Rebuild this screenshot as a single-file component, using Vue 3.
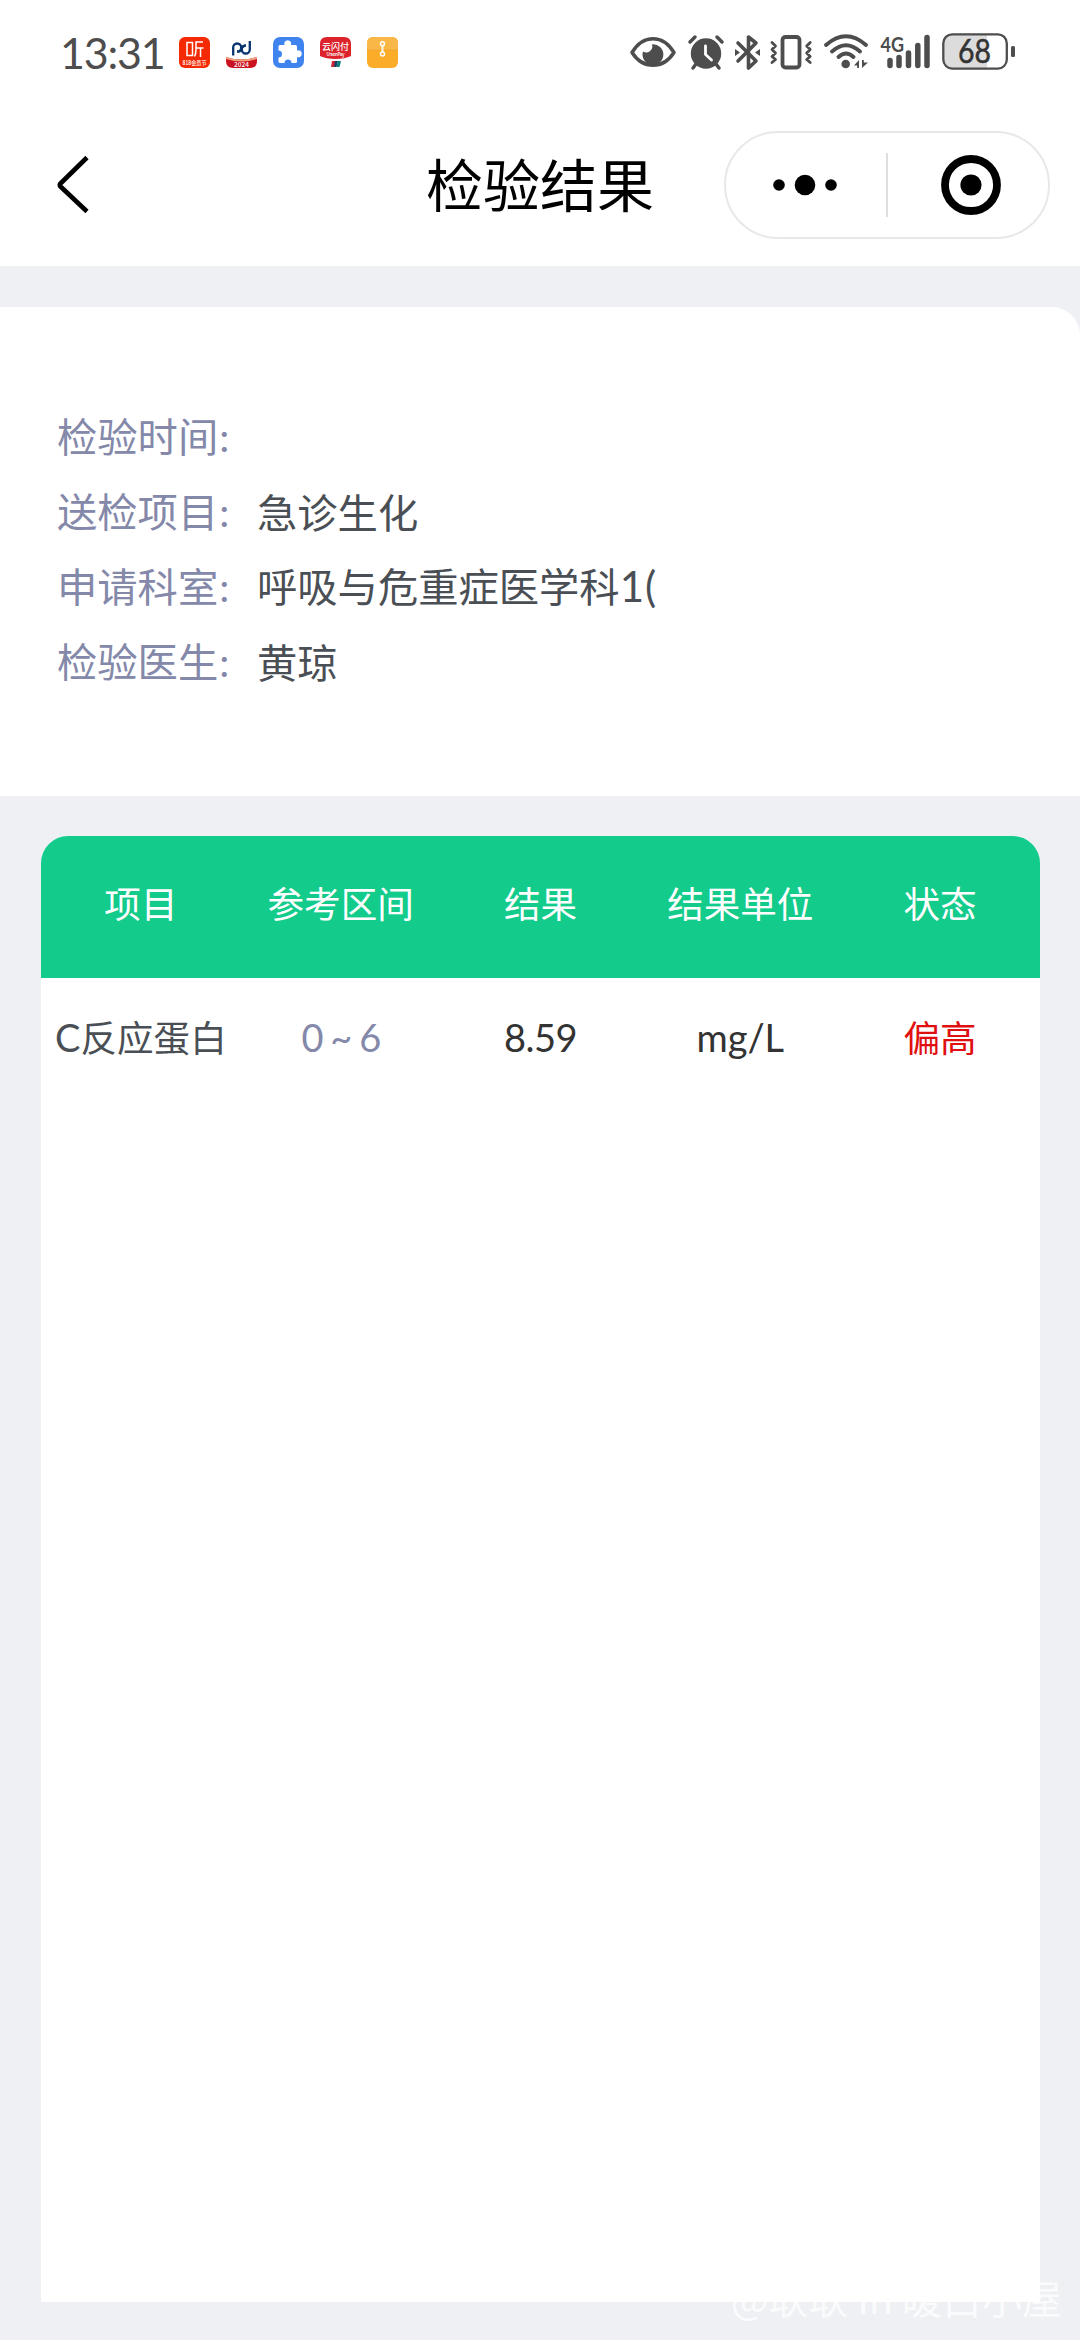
<script setup>
const details = [
  { label: '检验时间', value: '' },
  { label: '送检项目', value: '急诊生化' },
  { label: '申请科室', value: '呼吸与危重症医学科', suffix: '1(' },
  { label: '检验医生', value: '黄琼' },
]
const columns = ['项目', '参考区间', '结果', '结果单位', '状态']
const results = [
  { prefix: 'C', name: '反应蛋白', range: '0 ~ 6', value: '8.59', unit: 'mg/L', status: '偏高' },
]
</script>

<template>
  <div class="page">
    <header class="top">
      <div class="status">
        <span class="clock">13:31</span>
        <div class="apps">
          <svg viewBox="0 0 31 31" class="app">
            <rect width="31" height="31" rx="6" fill="#f52a05" />
            <g fill="none" stroke="#fff" stroke-width="1.5">
              <path d="M8 5.500h5.500v13H8zM24 5h-7v8c0 3-.5 4.500-1.500 6.500M17 11h7.500M21.500 11v9" />
            </g>
            <text x="15.500" y="28" class="app-text" font-size="6" textLength="24" lengthAdjust="spacingAndGlyphs">818会员节</text>
          </svg>
          <svg viewBox="0 0 31 31" class="app">
            <g fill="none" stroke="#08356f" stroke-width="2.300">
              <path d="M7.200 18.500V10.500a4 4 0 1 1 4 4" />
              <path d="M23.800 4v8.500a4 4 0 1 1-4-4" />
              <path d="M11.200 14.500q4 .5 4.300-2.500t4.300-3.500" />
            </g>
            <path d="M0 20q15 5 31 0v4q0 7-7 7H7q-7 0-7-7z" fill="#cb1220" />
            <path d="M0 20q15 5 31 0v2q-15 5-31 0z" fill="#f0a47e" />
            <text x="15.500" y="29.500" class="app-text" font-size="6.500" textLength="15">2024</text>
          </svg>
          <svg viewBox="0 0 31 31" class="app">
            <rect width="31" height="31" rx="7" fill="#3f84ee" />
            <path d="M7 8H11.500A3.500 3.500 0 1 1 18 8H22.500Q24 8 24 9.500V13.500A3.500 3.500 0 1 1 24 20V24.500Q24 26 22.500 26H18.500A3.500 3.500 0 0 0 11.500 26H7Q5.500 26 5.500 24.500V20.500A3.500 3.500 0 0 0 5.500 13.500V9.500Q5.500 8 7 8Z" fill="#fff" />
          </svg>
          <svg viewBox="0 0 31 31" class="app">
            <path d="M7 0h17q7 0 7 7v12q-6 3-15.500 3T0 19V7q0-7 7-7z" fill="#dc232b" />
            <text x="15.500" y="13" class="app-text" font-size="9" textLength="27">云闪付</text>
            <text x="15.500" y="18.500" class="app-text" font-size="4.500" textLength="18">UnionPay</text>
            <path d="M12 24h4l-1.500 6H11z" fill="#c82938" />
            <path d="M15 24h3l-1.500 6H14z" fill="#153d64" />
            <path d="M18 24h3l-1.500 6h-3z" fill="#087b76" />
          </svg>
          <svg viewBox="0 0 31 31" class="app">
            <rect width="31" height="31" rx="6" fill="#fbac28" />
            <path d="M0 13V6q0-6 6-6h19q6 0 6 6v7z" fill="#f8b747" />
            <path d="M0 13h31" stroke="#eca52e" stroke-width=".7" />
            <g fill="none" stroke="#fff" stroke-width="1.500">
              <circle cx="15.500" cy="6.800" r="2" /><circle cx="15.500" cy="17" r="2" />
              <path d="M15.500 8.500v7" stroke-width="2.200" opacity=".85" />
            </g>
          </svg>
        </div>
        <div class="signals">
          <svg width="46" height="40" viewBox="630 32 46 40">
            <path d="M632 52.500C643 34 663 34 674 52.500C663 69.500 643 69.500 632 52.500Z" fill="none" stroke="#4d4d4d" stroke-width="3.500" stroke-linejoin="round" />
            <path d="M652 44.200A10.400 10.400 0 1 1 643 51.500A6.200 6.200 0 0 0 652 44.200Z" fill="#4d4d4d" />
          </svg>
          <svg width="36" height="40" viewBox="688 32 36 40" class="alarm">
            <circle cx="706" cy="53.500" r="15.200" fill="#4d4d4d" />
            <g fill="none" stroke="#4d4d4d" stroke-width="3.500" stroke-linecap="round">
              <path d="M690 42l5-5M722 42l-5-5M696 64l-3 4M716 64l3 4" />
            </g>
            <path d="M705.500 46v8.500l6 5.500" fill="none" stroke="#fff" stroke-width="2.800" stroke-linecap="round" />
          </svg>
          <svg width="26" height="40" viewBox="735 32 26 40" class="bt">
            <g fill="none" stroke="#4d4d4d" stroke-width="3.600" stroke-linejoin="round" stroke-linecap="round">
              <path d="M738 43l18 18-7.500 7v-31L756 43l-18 18" />
            </g>
            <path d="M735 49l5 3.500-5 3.500zM760 49l-5 3.500 5 3.500z" fill="#4d4d4d" />
          </svg>
          <svg width="42" height="40" viewBox="770 32 42 40" class="vib">
            <g fill="none" stroke="#4d4d4d" stroke-linecap="round" stroke-linejoin="round">
              <rect x="782.500" y="37" width="17" height="30.500" rx="3" stroke-width="3.800" />
              <path d="M772 42.500l3.500 3.500-3.500 3.500 3.500 3.500-3.500 3.500 3.500 3-3.500 3M810.200 42.500l-3.500 3.500 3.500 3.500-3.500 3.500 3.500 3.500-3.500 3 3.500 3" stroke-width="2.800" />
            </g>
          </svg>
          <svg width="44" height="40" viewBox="824 32 44 40" class="wifi">
            <g fill="none" stroke="#4d4d4d" stroke-width="3.900" stroke-linecap="round">
              <path d="M826 45Q846 27.500 866 45M832 51.500Q846 39 860 51.500M838.500 57Q846 50 853.500 57" />
            </g>
            <circle cx="845.700" cy="64" r="4.300" fill="#4d4d4d" />
            <path d="M859 60v8h-1.800v-2.500H854zM862 60h1.800v2.500h4.200L862 68z" fill="#4d4d4d" />
          </svg>
          <svg width="50" height="40" viewBox="880 32 50 40" class="cell">
            <text x="880.500" y="51.500" class="net" textLength="23.500" lengthAdjust="spacingAndGlyphs">4G</text>
            <g stroke="#4d4d4d" stroke-width="5.500" stroke-linecap="round">
              <path d="M890 60.500v5M899 57.500v8M908.500 53v12.500M917.800 45.500v20M927 37.500v28" />
            </g>
          </svg>
          <svg width="74" height="40" viewBox="942 32 74 40" class="batt">
            <rect x="944" y="35" width="43" height="33" rx="7" fill="#dcdcdc" />
            <rect x="980" y="35" width="7" height="33" fill="#dcdcdc" />
            <rect x="943.300" y="34.300" width="63.500" height="34.300" rx="9" fill="none" stroke="#4d4d4d" stroke-width="2.300" />
            <rect x="1011" y="46" width="4" height="11" rx="1.500" fill="#4d4d4d" />
            <text x="974.500" y="62.500" class="level" textLength="33" lengthAdjust="spacingAndGlyphs">68</text>
          </svg>
        </div>
      </div>

      <nav class="nav">
        <svg class="back" width="34" height="60" viewBox="0 0 34 60">
          <path d="M31 2.500L4.500 28.500q-1.500 1.500 0 3L31 56.500" fill="none" stroke="#000" stroke-width="4.600" />
        </svg>
        <h1>检验结果</h1>
        <div class="capsule">
          <svg width="64" height="60" viewBox="0 0 64 60" class="dots">
            <circle cx="6" cy="30" r="5.800" /><circle cx="32" cy="30" r="10.300" /><circle cx="58" cy="30" r="5.800" />
          </svg>
          <span class="divider"></span>
          <svg width="60" height="60" viewBox="0 0 60 60" class="target">
            <circle cx="30" cy="30" r="26" fill="none" stroke="#000" stroke-width="7.800" />
            <circle cx="30" cy="30" r="10.600" />
          </svg>
        </div>
      </nav>
    </header>

    <section class="info">
      <div v-for="d in details" :key="d.label" class="line">
        <span class="label">{{ d.label }}<i>:</i></span>
        <span class="value">{{ d.value }}<i v-if="d.suffix">{{ d.suffix }}</i></span>
      </div>
    </section>

    <section class="table">
      <div class="head row">
        <span v-for="c in columns" :key="c">{{ c }}</span>
      </div>
      <div v-for="r in results" :key="r.name" class="row body">
        <span class="name"><i>{{ r.prefix }}</i>{{ r.name }}</span>
        <span class="range"><i>{{ r.range }}</i></span>
        <span class="result"><i>{{ r.value }}</i></span>
        <span><i>{{ r.unit }}</i></span>
        <span class="high">{{ r.status }}</span>
      </div>
    </section>
    <div class="watermark">@耿耿 in 暖白小屋</div>
  </div>
</template>

<style>
body { margin: 0; background: #eef0f4; }
</style>

<style scoped>
.page {
  position: relative;
  box-sizing: border-box;
  width: 1080px;
  height: 2340px;
  overflow: hidden;
  display: flex;
  flex-direction: column;
  background: #eef0f4;
  font-family: "Noto Sans CJK SC", sans-serif;
}
svg { display: block; flex: none; overflow: visible; }
i { font-style: normal; font-family: Lato, "Noto Sans CJK SC", sans-serif; }
.top { height: 266px; background: #fff; }
.status { height: 104px; display: flex; align-items: center; padding: 0 64px 0 60px; box-sizing: border-box; }
.clock { width: 119px; padding-top: 1px; font: 43px/60px Lato, sans-serif; letter-spacing: -1.200px; color: #4d4d4d; white-space: nowrap; }
.apps { display: flex; gap: 16px; padding-top: 1px; }
.app { width: 31px; height: 31px; }
.app-text { fill: #fff; text-anchor: middle; font-family: "Noto Sans CJK SC", sans-serif; font-weight: 500; }
.signals { display: flex; margin-left: auto; }
.alarm { margin-left: 12px; }
.bt { margin-left: 11px; }
.vib { margin-left: 9px; }
.wifi { margin-left: 12px; }
.cell { margin-left: 12px; }
.batt { margin-left: 12px; }
.net { font: 700 21px Lato, sans-serif; fill: #4d4d4d; }
.level { font: 32px Lato, sans-serif; fill: #333; stroke: #333; stroke-width: .5px; text-anchor: middle; }
.nav { height: 162px; display: grid; grid-template-columns: 1fr auto 1fr; align-items: center; }
.back { margin-left: 56px; }
h1 { margin: 0; padding-bottom: 6px; font-size: 57px; line-height: 80px; font-weight: 400; color: #000; }
.capsule {
  justify-self: end;
  display: flex;
  align-items: center;
  width: 326px;
  height: 108px;
  margin-right: 30px;
  box-sizing: border-box;
  border: 2px solid #e8e8e8;
  border-radius: 54px;
}
.dots { margin-left: 47px; }
.divider { width: 2px; height: 64px; margin-left: 49px; background: #dedede; }
.target { margin-left: 53px; }
.info {
  height: 489px;
  margin-top: 41px;
  padding: 91px 57px 0;
  box-sizing: border-box;
  background: #fff;
  border-top-right-radius: 28px;
}
.line { height: 75px; display: flex; align-items: center; font-size: 40.300px; line-height: 75px; white-space: nowrap; }
.label { width: 200px; color: #8488a9; }
.label i { margin-left: 1px; }
.value { color: #4a4f55; }
.value i { font-size: 42px; letter-spacing: 1px; }
.table {
  height: 1466px;
  margin: 40px 40px 0 41px;
  background: #fff;
  border-radius: 27px 27px 0 0;
  overflow: hidden;
}
.row { display: grid; grid-template-columns: repeat(5, 1fr); align-items: center; text-align: center; font-size: 36.600px; white-space: nowrap; }
.head { height: 142px; padding-bottom: 9px; box-sizing: border-box; background: #13cb8b; color: #fff; }
.body { height: 117px; color: #333; }
.body i { font-size: 38px; }
.name { color: #4a4f55; }
.range { color: #8488a9; letter-spacing: -1.400px; }
.result { letter-spacing: -.5px; }
.high { color: #e01010; }
.watermark { position: absolute; right: 18px; bottom: 14px; font-size: 40px; line-height: 58px; color: rgba(255, 255, 255, .75); white-space: nowrap; }
</style>
